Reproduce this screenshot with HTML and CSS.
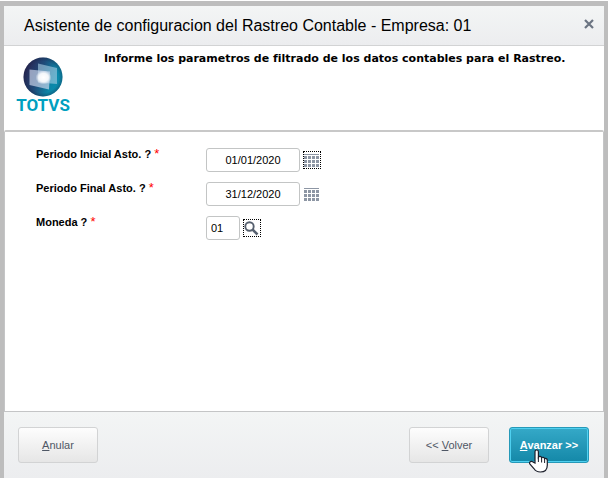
FILE: index.html
```
<!DOCTYPE html>
<html lang="es">
<head>
    <meta charset="UTF-8">
    <meta name="viewport" content="width=device-width, initial-scale=1.0">
    <title>Asistente de configuracion del Rastreo Contable</title>
    <link rel="stylesheet" href="styles.css">
</head>
<body>
    <div class="dialog">
        <div class="titlebar">
            <h1>Asistente de configuracion del Rastreo Contable - Empresa: 01</h1>
            <button type="button" class="close" aria-label="Cerrar">
                <svg width="10" height="10" viewBox="0 0 10 10"><path d="M1 1l8 8M9 1l-8 8" stroke="#6b7482" stroke-width="2.2"/></svg>
            </button>
        </div>

        <div class="intro">
            <svg class="logo" width="60" height="60" viewBox="0 0 60 60" role="img" aria-label="TOTVS">
                <defs>
                    <linearGradient id="ball" x1="0" y1="0.3" x2="1" y2="0.7">
                        <stop offset="0" stop-color="#2b2452"/>
                        <stop offset="0.4" stop-color="#1f4a78"/>
                        <stop offset="0.75" stop-color="#0b86a8"/>
                        <stop offset="1" stop-color="#0a90b0"/>
                    </linearGradient>
                    <radialGradient id="shade" cx="0.5" cy="0.5" r="0.5">
                        <stop offset="0.8" stop-color="#15203f" stop-opacity="0"/>
                        <stop offset="1" stop-color="#15203f" stop-opacity="0.35"/>
                    </radialGradient>
                    <radialGradient id="glow" cx="0.5" cy="0.5" r="0.5">
                        <stop offset="0" stop-color="#fff"/>
                        <stop offset="0.6" stop-color="#fff" stop-opacity="0.85"/>
                        <stop offset="1" stop-color="#fff" stop-opacity="0"/>
                    </radialGradient>
                </defs>
                <circle cx="29" cy="20" r="19.5" fill="url(#ball)"/>
                <circle cx="29" cy="20" r="19.5" fill="url(#shade)"/>
                <path d="M24 6.500l19 4.500v16l-19-1.500z" fill="#a9cfe4" fill-opacity="0.6"/>
                <path d="M15.500 12.500l20.500 2-1 18-19.500-4.500z" fill="#d3dcf0" fill-opacity="0.65"/>
                <ellipse cx="29.500" cy="20.500" rx="8" ry="7" fill="url(#glow)"/>
                <text class="brand" x="29" y="54" text-anchor="middle">TOTVS</text>
            </svg>
            <p>Informe los parametros de filtrado de los datos contables para el Rastreo.</p>
        </div>

        <form class="params" id="params">
            <div class="row">
                <label for="inicial">Periodo Inicial Asto. ? <span class="req">*</span></label>
                <input type="text" id="inicial" class="date" value="01/01/2020">
                <button type="button" class="pick focused" aria-label="Elegir fecha inicial">
                    <svg width="15" height="13" viewBox="0 0 15 13" shape-rendering="crispEdges" fill="#8d96a4"><path d="M0 0h15v1H0zM0 2h3v3H0zM4 2h3v3H4zM8 2h3v3H8zM12 2h3v3h-3zM0 6h3v3H0zM4 6h3v3H4zM8 6h3v3H8zM12 6h3v3h-3zM0 10h3v3H0zM4 10h3v3H4zM8 10h3v3H8zM12 10h3v3h-3z"/></svg>
                </button>
            </div>
            <div class="row">
                <label for="final">Periodo Final Asto. ? <span class="req">*</span></label>
                <input type="text" id="final" class="date" value="31/12/2020">
                <button type="button" class="pick" aria-label="Elegir fecha final">
                    <svg width="15" height="13" viewBox="0 0 15 13" shape-rendering="crispEdges" fill="#8d96a4"><path d="M0 0h15v1H0zM0 2h3v3H0zM4 2h3v3H4zM8 2h3v3H8zM12 2h3v3h-3zM0 6h3v3H0zM4 6h3v3H4zM8 6h3v3H8zM12 6h3v3h-3zM0 10h3v3H0zM4 10h3v3H4zM8 10h3v3H8zM12 10h3v3h-3z"/></svg>
                </button>
            </div>
            <div class="row">
                <label for="moneda">Moneda ? <span class="req">*</span></label>
                <input type="text" id="moneda" class="code" value="01">
                <button type="button" class="pick focused" aria-label="Buscar moneda">
                    <svg width="15" height="15" viewBox="0 0 15 15" fill="none" stroke="#56606f"><circle cx="5.500" cy="5.500" r="4.200" stroke-width="1.900"/><path d="M8.500 8.500l5 5" stroke-width="2.600"/></svg>
                </button>
            </div>
        </form>

        <div class="actions">
            <button type="button" class="btn"><u>A</u>nular</button>
            <button type="button" class="btn back">&lt;&lt; <u>V</u>olver</button>
            <button type="submit" form="params" class="btn primary"><u>A</u>vanzar &gt;&gt;
                <svg class="pointer" width="20" height="24" viewBox="0 0 20 24"><path d="M6 14V2.800c0-2.600 3.400-2.600 3.400 0v5.400c.7-1.200 2.900-1 3.200.6.900-1 2.900-.6 3 1 1-.8 2.700-.2 2.700 1.500v4.900c0 4-2.400 6.800-7 6.800-3.400 0-5-1.300-6.400-3.500L1 15.200c-1.400-2 1.200-3.700 2.900-2.300z" fill="#fff" stroke="#1c1f2b" stroke-width="1.200"/><path d="M9.400 8v5M12.600 9v4.500M15.600 10v4" stroke="#1c1f2b" fill="none"/></svg>
            </button>
        </div>
    </div>
</body>
</html>
```
FILE: styles.css
```
* {
    box-sizing: border-box;
}
body {
    margin: 0;
    padding: 1px 0;
    background: #fff;
    color: #000;
    font-family: "Liberation Sans", Arial, sans-serif;
    font-size: 11px;
}
button, input {
    font: inherit;
    margin: 0;
}
.dialog {
    display: flex;
    flex-direction: column;
    min-height: calc(100vh - 2px);
    border: 4px solid #bdbdbd;
    border-top-width: 5px;
    border-bottom: none;
}
.titlebar {
    display: flex;
    align-items: center;
    justify-content: space-between;
    height: 40px;
    padding: 0 10px 0 20px;
    background: linear-gradient(#f3f5f5, #ecedef);
    border-bottom: 1px solid #d2d3d4;
}
.titlebar h1 {
    margin: 0;
    font-size: 16px;
    font-weight: normal;
}
.close {
    display: flex;
    padding: 0 0 4px;
    border: none;
    background: none;
}
.intro {
    display: flex;
    gap: 30px;
    min-height: 84px;
    padding: 6px 10px;
}
.logo {
    flex: none;
    margin-top: 5px;
}
.brand {
    font-family: Roboto, sans-serif;
    font-size: 17px;
    font-weight: bold;
    fill: #009fc0;
}
.intro p {
    margin: 0;
    font-family: "DejaVu Sans", Verdana, sans-serif;
    font-size: 11px;
    font-weight: bold;
    line-height: 14px;
}
.params {
    flex: 1;
    display: flex;
    flex-direction: column;
    gap: 10px;
    padding: 16px 31px;
    border: 1px solid #c4c5c6;
    border-top: 2px solid #c8c8c8;
    border-radius: 2px 2px 0 0;
}
.row {
    display: flex;
    align-items: center;
    height: 24px;
}
.row label {
    align-self: flex-start;
    width: 170px;
    font-weight: bold;
    line-height: 13px;
}
.req {
    color: #f00;
    font-size: 13px;
    font-weight: normal;
    line-height: 11px;
}
.row input {
    height: 24px;
    padding: 0 4px;
    border: 1px solid #c3c5c5;
    border-radius: 3px;
    background: #fff;
}
.row .date {
    width: 94px;
    text-align: center;
}
.row .code {
    width: 34px;
}
.pick {
    display: flex;
    align-items: center;
    justify-content: flex-start;
    width: 18px;
    height: 18px;
    margin-left: 3px;
    padding: 0;
    border: 1px dotted transparent;
    background: none;
}
.pick.focused {
    border-color: #000;
}
.actions {
    display: flex;
    gap: 20px;
    padding: 15px 15px 15px 14px;
    background: linear-gradient(#f3f5f5, #ecedef);
}
.btn {
    position: relative;
    width: 80px;
    height: 36px;
    padding: 0;
    border: 1px solid #d2d3d4;
    border-radius: 3px;
    background: linear-gradient(#fdfdfd, #e6e6e6);
    color: #4f5765;
}
.back {
    margin-left: auto;
}
.primary {
    border-color: #2699b8;
    background: linear-gradient(#35a9c8, #1488a8);
    box-shadow: inset 0 0 0 1px #4fd0f0;
    color: #fff;
    font-weight: bold;
}
.pointer {
    position: absolute;
    left: 19px;
    top: 21px;
}
```
